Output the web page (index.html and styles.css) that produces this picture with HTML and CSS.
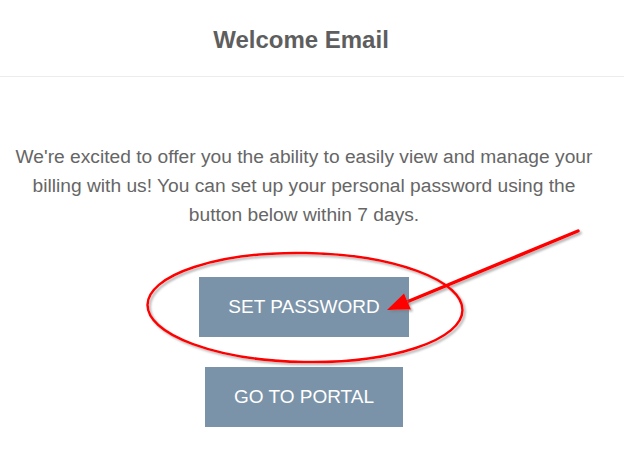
FILE: index.html
```html
<!DOCTYPE html>
<html lang="en">
<head>
  <meta charset="UTF-8" />
  <title>Welcome Email</title>
  <meta name="viewport" content="width=device-width, initial-scale=1" />
  <link rel="stylesheet" href="styles.css">
</head>
<body>

  <div class="page">
    <header>
      <h1>Welcome Email</h1>
    </header>

    <main>
      <p class="intro">We're excited to offer you the ability to easily view and manage your billing with us! You can set up your personal password using the button below within 7 days.</p>

      <div class="btn-group">
        <a class="btn" href="#">SET PASSWORD</a>
        <a class="btn" href="#">GO TO PORTAL</a>
      </div>
    </main>

    <!-- hand drawn markup on top of the screenshot -->
    <svg class="markup" width="624" height="470" viewBox="0 0 624 470">
      <defs>
        <filter id="shade" x="-10%" y="-10%" width="120%" height="130%">
          <feDropShadow dx="2" dy="2" stdDeviation="1" flood-color="#777" flood-opacity="0.55" />
        </filter>
      </defs>
      <g filter="url(#shade)" fill="none" stroke="#ff0000">
        <ellipse cx="305" cy="307.5" rx="157.5" ry="54.5" stroke-width="2.5" transform="rotate(1 305 307.5)" />
        <line x1="578" y1="231" x2="402" y2="304" stroke-width="3.5" stroke-linecap="round" />
      </g>
      <polygon points="387,310 411,309.5 404,293.5" fill="#ff0000" filter="url(#shade)" />
    </svg>
  </div>

</body>
</html>
```

FILE: styles.css
```css
body {
  font-family: 'Liberation Sans', Arial, sans-serif;
  background-color: #fff;
  margin: 0;
  color: #666;
}

.page {
  position: relative;
  width: 624px;
  height: 470px;
  overflow: hidden;
}

header {
  width: 100%;
  height: 77px;
  display: flex;
  align-items: center;
  justify-content: center;
  border-bottom: 1px solid #ececec;
  box-sizing: border-box;
}

header h1 {
  margin: 0 22px 0 0;
  font-size: 24px;
  font-weight: 700;
  color: #5e5e5e;
  padding-top: 3px;
}

main {
  width: 608px;
  padding: 0 4px;
  box-sizing: border-box;
}

.intro {
  margin: 65px 0 0 0;
  font-size: 19.2px;
  line-height: 29px;
  text-align: center;
  color: #666;
}

.btn-group {
  margin-top: 48px;
  display: flex;
  flex-direction: column;
  align-items: center;
  gap: 30px;
}

.btn {
  display: block;
  height: 60px;
  line-height: 60px;
  padding: 0 29px;
  background-color: #7b93a8;
  color: #fff;
  font-size: 19px;
  text-decoration: none;
}

.markup {
  position: absolute;
  top: 0;
  left: 0;
  pointer-events: none;
}
```
